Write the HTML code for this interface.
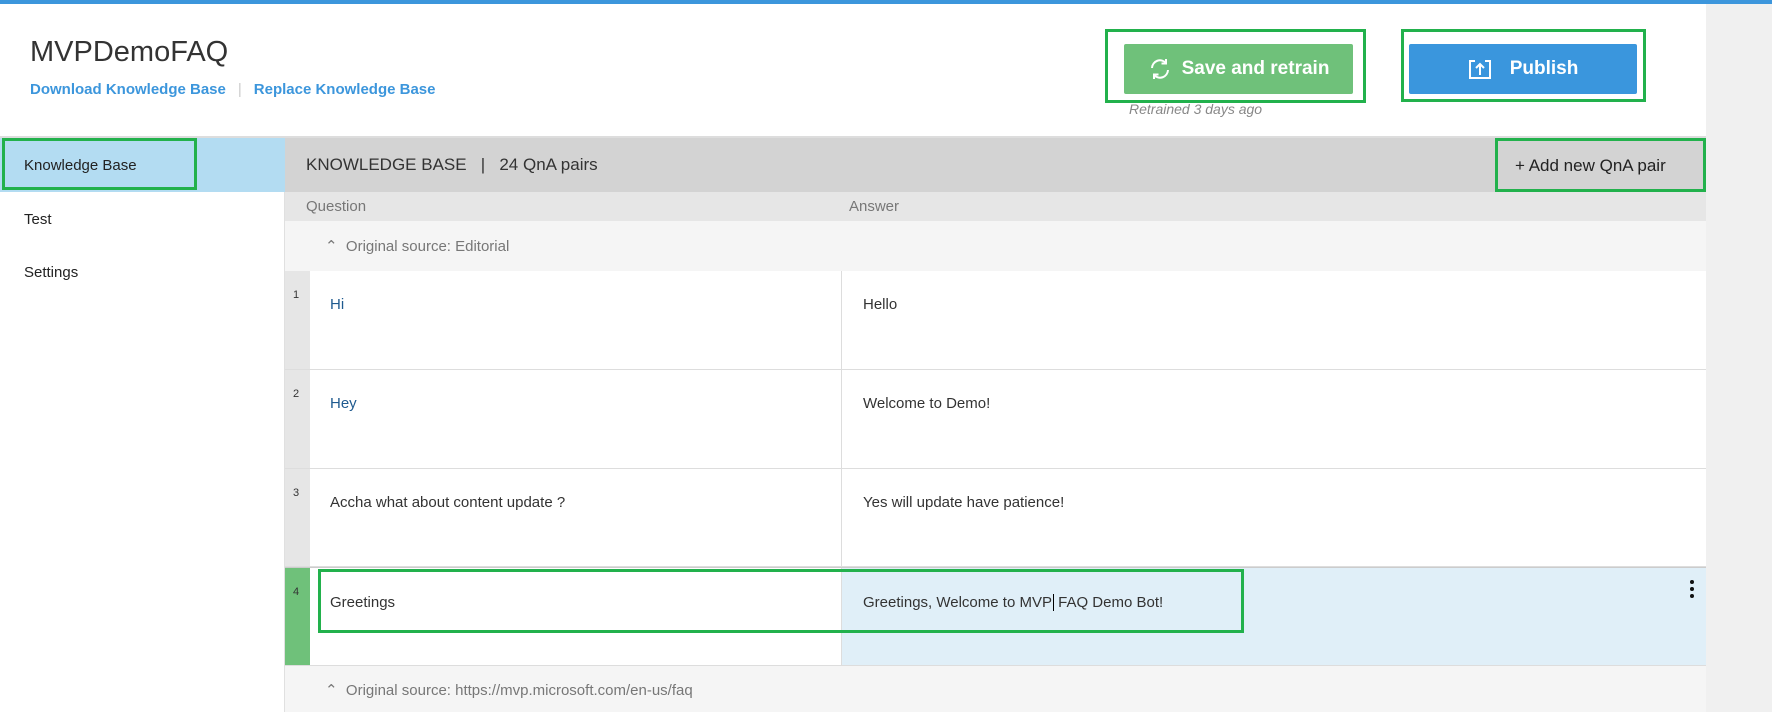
<!DOCTYPE html>
<html><head><meta charset="utf-8"><style>
*{margin:0;padding:0;box-sizing:border-box}
body{width:1772px;height:712px;overflow:hidden;background:#fff;font-family:"Liberation Sans",sans-serif;color:#333;position:relative}
.a{position:absolute}
.topbar{left:0;top:0;width:1772px;height:4px;background:#3c96dc}
.strip{left:1706px;top:4px;width:66px;height:708px;background:#f0f0f0}
.title{left:30px;top:36px;font-size:29px;color:#333}
.links{left:30px;top:81px;font-size:15px;color:#3c96dc;font-weight:bold}
.links span.sep{color:#ccc;font-weight:normal;margin:0 12px}
.gbox{border:3px solid #22b14c}
.btn{color:#fff;font-weight:bold;font-size:19px;display:flex;align-items:center;justify-content:center;border-radius:2px}
.retr{left:1129px;top:101px;font-size:14px;font-style:italic;color:#888}
.hr{left:0;top:136px;width:1706px;height:2px;background:#ddd}
.side{left:0;top:138px;width:285px;height:574px;background:#fff;border-right:1px solid #e0e0e0}
.nav{left:0;top:138px;width:285px;height:54px;background:#b3dcf2}
.navt{font-size:15px;color:#222}
.mh{left:285px;top:138px;width:1421px;height:54px;background:#d3d3d3}
.ch{left:285px;top:192px;width:1421px;height:29px;background:#e6e6e6;font-size:15px;color:#777}
.src{left:285px;width:1421px;background:#f5f5f5;font-size:15px;color:#777}
.row{left:285px;width:1421px;background:#fff;border-bottom:1px solid #ddd}
.num{position:absolute;left:0;top:0;width:25px;height:100%;background:#e6e6e6;font-size:11px;padding:18px 0 0 8px;color:#333}
.q{position:absolute;left:45px;top:0;font-size:15px}
.ans{position:absolute;left:556px;top:0;bottom:0;border-left:1px solid #ddd;padding-left:21px;font-size:15px;width:865px}
</style></head><body>
<div class="a topbar"></div>
<div class="a strip"></div>
<div class="a title">MVPDemoFAQ</div>
<div class="a links">Download Knowledge Base<span class="sep">|</span>Replace Knowledge Base</div>

<div class="a gbox" style="left:1105px;top:29px;width:261px;height:74px"></div>
<div class="a btn" style="left:1124px;top:44px;width:229px;height:50px;background:#6fc17a">
<svg width="24" height="24" viewBox="0 0 24 24" style="margin-right:10px"><path d="M4 11a8 8 0 0 1 14-5M20 13a8 8 0 0 1-14 5" fill="none" stroke="#fff" stroke-width="2"/><path d="M18 2v4.5h-4.5M6 22v-4.5h4.5" fill="none" stroke="#fff" stroke-width="2"/></svg>Save and retrain</div>
<div class="a retr">Retrained 3 days ago</div>

<div class="a gbox" style="left:1401px;top:29px;width:245px;height:73px"></div>
<div class="a btn" style="left:1409px;top:44px;width:228px;height:50px;background:#3a96dd">
<svg width="24" height="22" viewBox="0 0 24 22" style="margin-right:18px"><path d="M7 3H2v17h20V3h-5" fill="none" stroke="#fff" stroke-width="2"/><path d="M12 17V6M8 10l4-4 4 4" fill="none" stroke="#fff" stroke-width="2"/></svg>Publish</div>

<div class="a hr"></div>
<div class="a side"></div>
<div class="a nav"></div>
<div class="a gbox" style="left:2px;top:138px;width:195px;height:52px"></div>
<div class="a navt" style="left:24px;top:157px">Knowledge Base</div>
<div class="a navt" style="left:24px;top:211px">Test</div>
<div class="a navt" style="left:24px;top:264px">Settings</div>

<div class="a mh"><div style="position:absolute;left:21px;top:17px;font-size:17px;color:#333">KNOWLEDGE BASE &nbsp;&nbsp;| &nbsp;&nbsp;24 QnA pairs</div></div>
<div class="a gbox" style="left:1495px;top:138px;width:211px;height:54px"></div>
<div class="a" style="left:1515px;top:156px;font-size:17px;color:#222">+ Add new QnA pair</div>

<div class="a ch"><span style="position:absolute;left:21px;top:6px">Question</span><span style="position:absolute;left:564px;top:6px">Answer</span></div>
<div class="a src" style="top:221px;height:50px"><span style="position:absolute;left:40px;top:16px">&#8963;&nbsp;&nbsp;Original source: Editorial</span></div>

<div class="a row" style="top:271px;height:99px"><div class="num">1</div><div class="q" style="top:25px;color:#1f5a8f">Hi</div><div class="ans"><div style="margin-top:25px">Hello</div></div></div>
<div class="a row" style="top:370px;height:99px"><div class="num">2</div><div class="q" style="top:25px;color:#1f5a8f">Hey</div><div class="ans"><div style="margin-top:25px">Welcome to Demo!</div></div></div>
<div class="a row" style="top:469px;height:98px"><div class="num">3</div><div class="q" style="top:25px">Accha what about content update ?</div><div class="ans"><div style="margin-top:25px">Yes will update have patience!</div></div></div>
<div class="a row" style="top:567px;height:99px;border-top:1px solid #ccc"><div class="num" style="background:#6fc17a">4</div><div class="q" style="top:26px">Greetings</div><div class="ans" style="background:#e0eff8"><div style="margin-top:26px">Greetings, Welcome to MVP<span style="border-left:1px solid #000;margin-left:1px"></span> FAQ Demo Bot!</div></div></div>
<div class="a gbox" style="left:318px;top:569px;width:926px;height:64px"></div>
<div class="a" style="left:1690px;top:580px;width:4px">
<div style="width:4px;height:4px;border-radius:2px;background:#111;margin-bottom:3px"></div><div style="width:4px;height:4px;border-radius:2px;background:#111;margin-bottom:3px"></div><div style="width:4px;height:4px;border-radius:2px;background:#111"></div></div>
<div class="a src" style="top:666px;height:46px"><span style="position:absolute;left:40px;top:15px">&#8963;&nbsp;&nbsp;Original source: https://mvp.microsoft.com/en-us/faq</span></div>
</body></html>
